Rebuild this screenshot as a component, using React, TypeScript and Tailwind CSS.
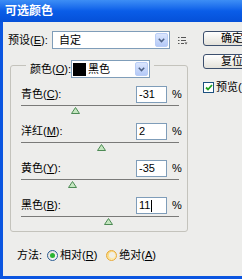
import React from "react";

type Row = { label: string; hotkey: string; value: string; caret?: boolean };

const rows: Row[] = [
  { label: "青色", hotkey: "C", value: "-31" },
  { label: "洋红", hotkey: "M", value: "2" },
  { label: "黄色", hotkey: "Y", value: "-35" },
  { label: "黑色", hotkey: "B", value: "11", caret: true },
];

function Hot({ text, k }: { text: string; k: string }) {
  return (
    <span className="whitespace-nowrap">
      {text}(<span className="underline underline-offset-1">{k}</span>)
    </span>
  );
}

function DropArrow() {
  return (
    <div className="flex h-[14px] w-[13px] items-center justify-center rounded-[2px] border border-[#b9cdf6] bg-gradient-to-b from-[#dbe6fd] to-[#b4c9f7]">
      <svg width="7" height="5" viewBox="0 0 7 5">
        <path d="M0.8 0.8 L3.5 3.6 L6.2 0.8" fill="none" stroke="#4d6185" strokeWidth="1.5" />
      </svg>
    </div>
  );
}

function Thumb({ value }: { value: number }) {
  // track is 158px wide, -100..100
  const left = 79 + value * 0.79 - 4.5;
  return (
    <svg className="absolute top-[2px]" style={{ left }} width="9" height="7" viewBox="0 0 9 7">
      <path d="M4.5 0.5 L8.5 6.5 L0.5 6.5 Z" fill="#c4e6bf" stroke="#4d8a55" strokeWidth="1" />
    </svg>
  );
}

function XpButton({ children }: { children: React.ReactNode }) {
  return (
    <div className="flex h-[15px] w-[58px] items-center justify-center rounded-[3px] border border-[#3c4f6d] bg-gradient-to-b from-[#ffffff] to-[#e4e2da] text-[11px] leading-none">
      {children}
    </div>
  );
}

export default function App() {
  return (
    <div className="flex h-[279px] w-[242px] flex-col overflow-hidden bg-[#0b55e0] font-['Liberation_Sans','Noto_Sans_CJK_SC',sans-serif] text-[11px] text-black">
      <div className="flex h-[22px] items-center bg-gradient-to-b from-[#3d8ef5] via-[#0a5de8] to-[#0550d8] pl-[5px] text-[12px] font-bold text-white">
        可选颜色
      </div>
      <div className="ml-[3px] mb-[3px] flex flex-1 bg-[#ededeb]">
        <div className="flex w-[200px] shrink-0 flex-col">
          <div className="mt-[9px] flex h-[18px] items-center pl-[5px]">
            <div className="w-[44px]">
              <Hot text="预设" k="E" />:
            </div>
            <div className="flex h-[18px] w-[118px] items-center justify-between border border-[#7f9db9] bg-white pl-[6px] pr-[1px]">
              <span>自定</span>
              <DropArrow />
            </div>
            <svg className="ml-[8px]" width="10" height="9" viewBox="0 0 10 9">
              <path d="M0 1.5h1.5M3 1.5h5M0 4.5h1.5M3 4.5h5M0 7.5h1.5M3 7.5h3" stroke="#555" strokeWidth="1" />
              <path d="M6.5 6.5 L9.5 6.5 L8 8.5 Z" fill="#555" />
            </svg>
          </div>

          <div className="ml-[7px] mt-[16px] flex w-[178px] flex-col rounded-[3px] border border-[#c4c3bc] pb-[5px]">
            <div className="-mt-[6px] ml-[15px] flex h-[18px] w-fit items-center bg-[#ededeb] px-[4px]">
              <span className="w-[41px]">
                <Hot text="颜色" k="O" />:
              </span>
              <div className="flex h-[18px] w-[79px] items-center justify-between border border-[#7f9db9] bg-white pl-[1px] pr-[1px]">
                <div className="flex items-center">
                  <div className="h-[13px] w-[13px] bg-black" />
                  <span className="ml-[2px]">黑色</span>
                </div>
                <DropArrow />
              </div>
            </div>

            <div className="mt-[8px] flex flex-col gap-[8px] pl-[10px]">
              {rows.map((r) => (
                <div key={r.label} className="flex flex-col">
                  <div className="flex h-[17px] items-center">
                    <div className="w-[115px]">
                      <Hot text={r.label} k={r.hotkey} />:
                    </div>
                    <div className="flex h-[17px] w-[31px] items-center border border-[#7f9db9] bg-white pl-[2px]">
                      <span>{r.value}</span>
                      {r.caret && <span className="ml-[1px] h-[12px] w-px bg-black" />}
                    </div>
                    <span className="ml-[5px]">%</span>
                  </div>
                  <div className="relative mt-[2px] h-[10px] w-[158px]">
                    <div className="h-px w-full bg-[#7a7a78]" />
                    <Thumb value={Number(r.value)} />
                  </div>
                </div>
              ))}
            </div>
          </div>

          <div className="mt-[16px] flex h-[14px] items-center pl-[14px]">
            <span className="w-[30px]">方法:</span>
            <div className="flex items-center">
              <div className="flex h-[11px] w-[11px] items-center justify-center rounded-full border border-[#2c5d94] bg-gradient-to-br from-[#dcdcd6] to-white">
                <div className="h-[5px] w-[5px] rounded-full bg-[#2bb532]" />
              </div>
              <span className="ml-[2px]">
                <Hot text="相对" k="R" />
              </span>
            </div>
            <div className="ml-[9px] flex items-center">
              <div className="flex h-[11px] w-[11px] items-center justify-center rounded-full border border-[#e8a93a] bg-gradient-to-br from-[#f7d26b] to-[#fff4c6]">
                <div className="h-[6px] w-[6px] rounded-full bg-[#f1efe6]" />
              </div>
              <span className="ml-[2px]">
                <Hot text="绝对" k="A" />
              </span>
            </div>
          </div>
        </div>

        <div className="flex flex-col pt-[9px]">
          <XpButton>确定</XpButton>
          <div className="mt-[8px]">
            <XpButton>复位</XpButton>
          </div>
          <div className="mt-[10px] flex items-center">
            <div className="flex h-[11px] w-[11px] items-center justify-center border border-[#1c5180] bg-white">
              <svg width="8" height="7" viewBox="0 0 8 7">
                <path d="M1 3.5 L3 5.5 L7 1" fill="none" stroke="#21a121" strokeWidth="1.8" />
              </svg>
            </div>
            <span className="ml-[2px] whitespace-nowrap">
              预览(<span className="underline underline-offset-1">P</span>)
            </span>
          </div>
        </div>
      </div>
    </div>
  );
}
